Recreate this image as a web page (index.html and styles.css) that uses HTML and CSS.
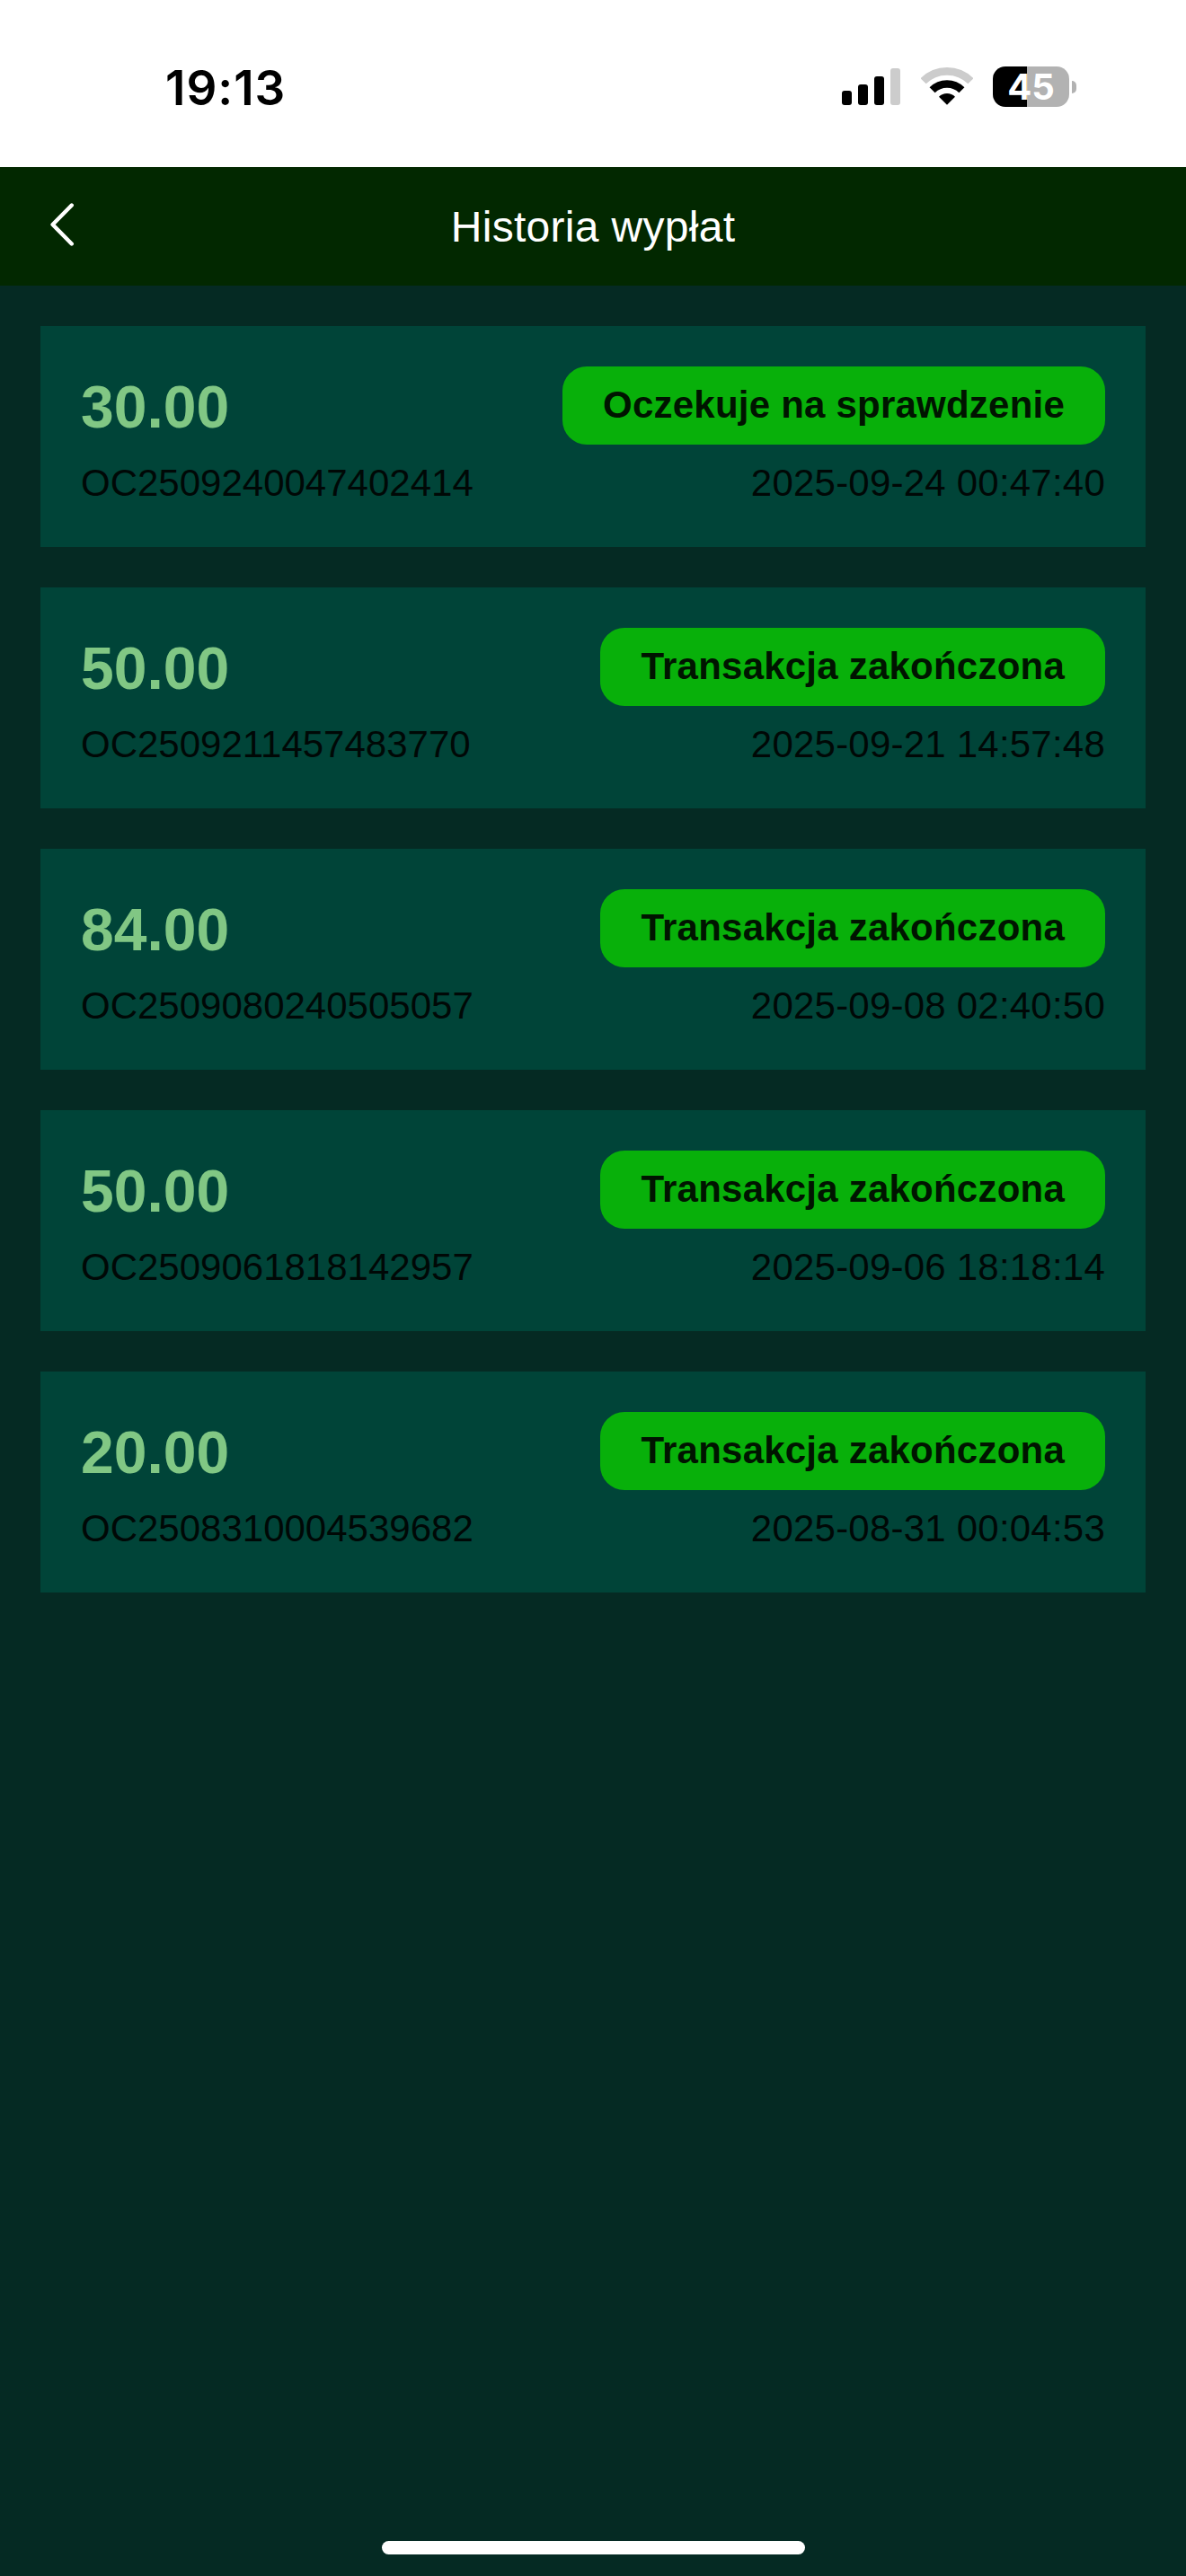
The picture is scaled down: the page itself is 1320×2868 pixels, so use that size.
FILE: index.html
```html
<!DOCTYPE html>
<html lang="pl">

<head>
    <meta charset="UTF-8">
    <meta name="viewport" content="width=device-width, initial-scale=1.0">
    <title>Historia wypłat</title>
    <link rel="stylesheet" href="styles.css">
</head>

<body>
    <!-- status bar -->
    <div class="status">
        <span class="time">19:13</span>
        <div class="icons">
            <svg class="signal" width="65" height="42" viewBox="0 0 65 42">
                <rect x="0" y="25" width="11" height="16" rx="3" />
                <rect x="18" y="18" width="11" height="23" rx="3" />
                <rect x="36" y="9" width="11" height="32" rx="3" />
                <rect x="54" y="0" width="11" height="41" rx="3" fill="#ccc" />
            </svg>
            <svg class="wifi" width="58" height="42" viewBox="0 0 58 42">
                <g fill="none" stroke-width="8.6">
                    <path d="M2.6 15.3A37.3 37.3 0 0 1 55.4 15.3" stroke="#ccc" />
                    <path d="M12.6 25.3A23.2 23.2 0 0 1 45.4 25.3" stroke="#000" />
                </g>
                <path d="M29 41.7L20 32.8A12.8 12.8 0 0 1 38 32.8Z" />
            </svg>
            <div class="battery"><span>45</span></div>
            <div class="nub"></div>
        </div>
    </div>

    <div class="header">
        <svg class="back" width="30" height="52" viewBox="0 0 30 52">
            <path d="M24.8 4.5L3.6 26L24.8 47.5" fill="none" stroke="#fff" stroke-width="4.4" stroke-linecap="round" stroke-linejoin="round" />
        </svg>
        <h1>Historia wypłat</h1>
    </div>

    <ul class="list">
        <li>
            <div class="row"><b class="money">30.00</b><span class="state">Oczekuje na sprawdzenie</span></div>
            <div class="row info"><span>OC2509240047402414</span><span class="date">2025-09-24 00:47:40</span></div>
        </li>
        <li>
            <div class="row"><b class="money">50.00</b><span class="state">Transakcja zakończona</span></div>
            <div class="row info"><span>OC2509211457483770</span><span class="date">2025-09-21 14:57:48</span></div>
        </li>
        <li>
            <div class="row"><b class="money">84.00</b><span class="state">Transakcja zakończona</span></div>
            <div class="row info"><span>OC2509080240505057</span><span class="date">2025-09-08 02:40:50</span></div>
        </li>
        <li>
            <div class="row"><b class="money">50.00</b><span class="state">Transakcja zakończona</span></div>
            <div class="row info"><span>OC2509061818142957</span><span class="date">2025-09-06 18:18:14</span></div>
        </li>
        <li>
            <div class="row"><b class="money">20.00</b><span class="state">Transakcja zakończona</span></div>
            <div class="row info"><span>OC2508310004539682</span><span class="date">2025-08-31 00:04:53</span></div>
        </li>
    </ul>

    <div class="home"></div>
</body>

</html>
```
FILE: styles.css
```css
* {
    padding: 0;
    margin: 0;
    box-sizing: border-box;
    list-style: none;
}

body {
    display: flex;
    flex-direction: column;
    height: 2868px;
    background-color: #052a23;
    font-family: "Liberation Sans", Arial, sans-serif;
}

/* status bar */
.status {
    display: flex;
    justify-content: space-between;
    height: 186px;
    padding: 74px 122px 0 184px;
    background-color: #fff;
}

.time {
    font: 600 53px/49px Inter, sans-serif;
    letter-spacing: 1px;
}

.icons {
    display: flex;
    height: 45px;
}

.signal {
    margin: 2px 23px 0 0;
}

.wifi {
    margin: 1px 22px 0 0;
}

.battery {
    width: 85px;
    height: 45px;
    border-radius: 14px;
    background: linear-gradient(to right, #000 38px, #b2b2b2 38px);
    color: #fff;
    font: 700 40px/45px Inter, sans-serif;
    text-align: center;
}

.nub {
    width: 5px;
    height: 14px;
    margin: 16px 0 0 3px;
    border-radius: 0 6px 6px 0;
    background-color: #b2b2b2;
}

/* title */
.header {
    display: grid;
    grid-template-columns: 90px 1fr 90px;
    align-items: center;
    height: 132px;
    background-color: #022800;
    color: #fff;
}

.back {
    margin: -4px 0 0 55px;
}

.header h1 {
    font-size: 48px;
    font-weight: normal;
    letter-spacing: 0.3px;
    text-align: center;
}

/* records */
.list {
    display: flex;
    flex-direction: column;
    gap: 45px;
    padding: 45px;
}

.list li {
    height: 246px;
    padding: 45px;
    background-color: #004438;
}

.row {
    display: flex;
    justify-content: space-between;
}

.money {
    color: #81c784;
    font-size: 66px;
    line-height: 90px;
}

.state {
    height: 87px;
    padding: 0 45px;
    border-radius: 27px;
    background-color: #08b00a;
    color: #001400;
    font-size: 42px;
    font-weight: bold;
    letter-spacing: 0.22px;
    line-height: 85px;
}

.info {
    margin-top: 9px;
    color: #000806;
    font-size: 42px;
    line-height: 61px;
}

.date {
    letter-spacing: 0.22px;
}

.home {
    width: 471px;
    height: 15px;
    margin: auto auto 24px;
    border-radius: 8px;
    background-color: #fff;
}
```
